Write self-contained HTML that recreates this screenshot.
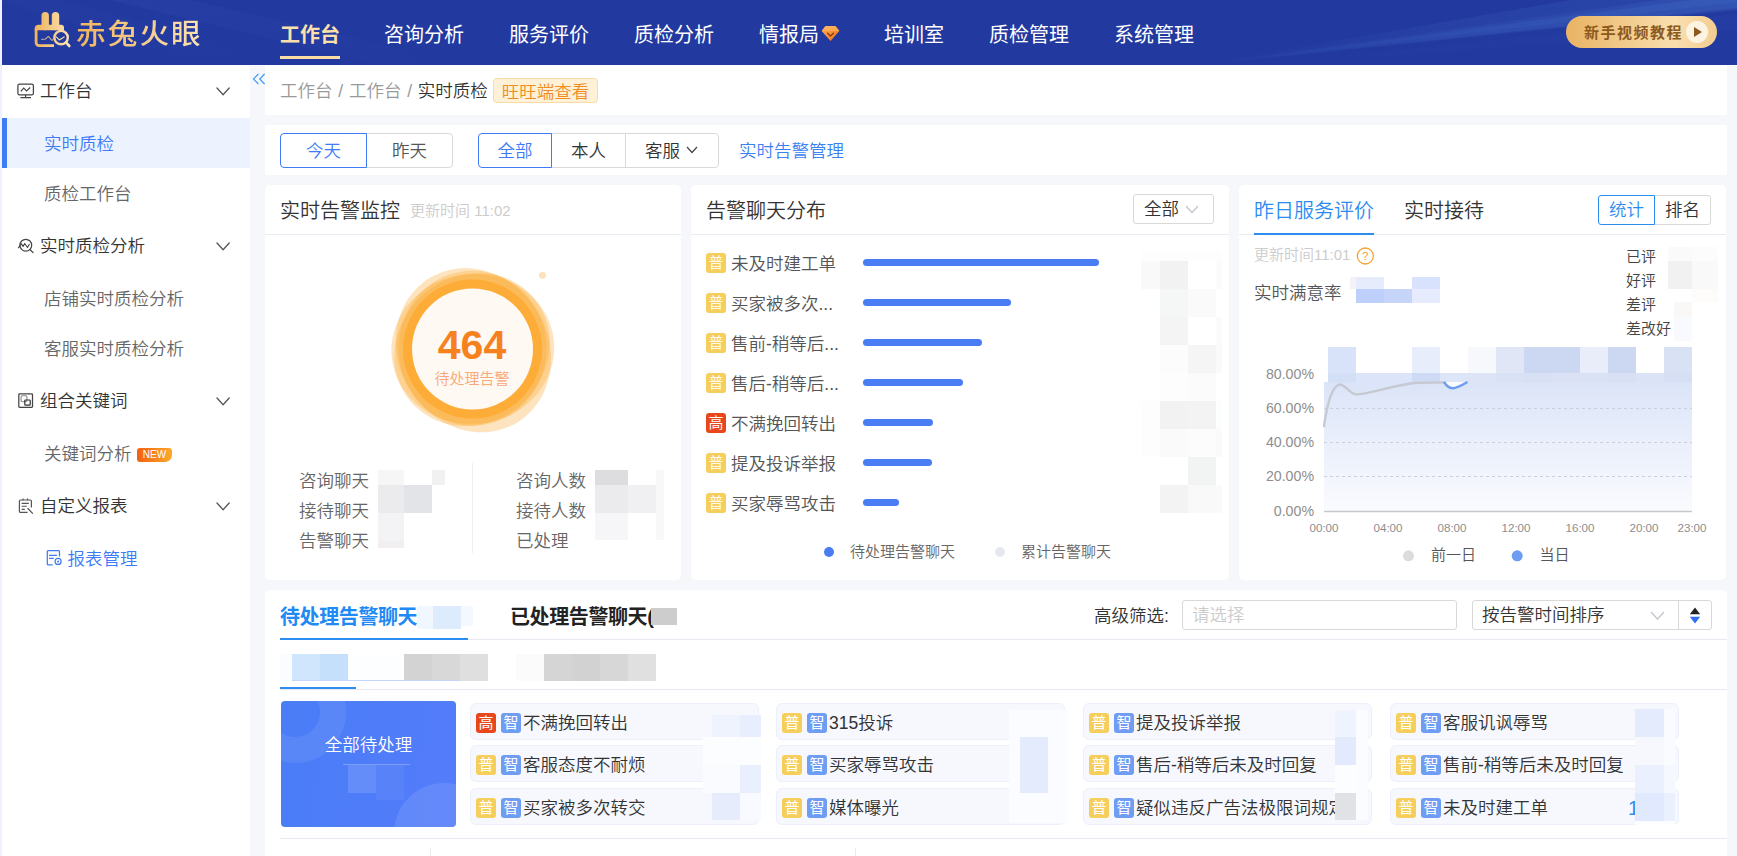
<!DOCTYPE html>
<html lang="zh-CN">
<head>
<meta charset="utf-8">
<title>赤兔火眼 - 实时质检</title>
<style>
*{box-sizing:border-box;margin:0;padding:0}
html,body{width:1737px;height:856px;overflow:hidden;background:#f6f7fa}
body{font-family:"Liberation Sans","Noto Sans CJK SC",sans-serif;color:#333;font-size:17.5px;position:relative;font-weight:350}
.abs,.t,.m{position:absolute}
.t{white-space:nowrap;line-height:24px}
.m{display:block}
#strip{left:0;top:0;width:2px;height:856px;background:#eef2fe;z-index:50}
#hdr{left:0;top:0;width:1737px;height:65px;background:#22399f;overflow:hidden}
#hdr .ray{position:absolute;left:0;top:0;width:1737px;height:65px}
.nav{position:absolute;top:0;height:65px;line-height:71px;font-size:20px;color:#fff;white-space:nowrap;font-weight:400}
.nav.on{font-weight:bold;color:#fbe0ac}
#navline{left:280px;top:56px;width:60px;height:3px;background:#fbdca4}
#logo-t{left:76.3px;top:14.5px;font-size:28px;line-height:40px;letter-spacing:1.9px;transform:scaleX(1.06);transform-origin:0 0;font-weight:500;background:linear-gradient(90deg,#f0b45c,#fbe3b6);-webkit-background-clip:text;background-clip:text;color:transparent;white-space:nowrap}
#tut{left:1566px;top:16px;width:151px;height:32px;border-radius:16px;background:linear-gradient(90deg,#e9b364,#f9dfae 72%,#f2cd90)}
#tut span{position:absolute;left:18px;top:0;line-height:33px;font-size:15px;font-weight:700;color:#8d5a1e;letter-spacing:1.5px;white-space:nowrap}
#tut i{position:absolute;left:120px;top:5px;width:22px;height:22px;border-radius:50%;background:#fdf3e3}
#tut i:after{content:"";position:absolute;left:8px;top:6px;border-left:8px solid #8d5a1e;border-top:5px solid transparent;border-bottom:5px solid transparent}
#side{left:2px;top:65px;width:248px;height:791px;background:#fff}
.sg,.si{position:absolute;left:0;width:248px;height:50px;line-height:51px;font-size:17.5px;white-space:nowrap}
.sg{color:#333}.si{color:#666;line-height:53px}
.sg span{position:absolute;left:38px}
.si span{position:absolute;left:42px}
.si.on{background:#ecf2fe;color:#3d7bf7}
.si.on:before{content:"";position:absolute;left:0;top:0;width:5px;height:50px;background:#3d7bf7}
.chev{position:absolute;left:214.3px;top:21.3px;width:14px;height:9px}
.ico{position:absolute}
.card{position:absolute;background:#fff;border-radius:5px}
.hl{position:absolute;height:1px;background:#e9ebf2}
.btn{position:absolute;top:133px;height:35px;line-height:34px;text-align:center;font-size:17.5px;color:#333;border:1px solid #d9d9d9;background:#fff;white-space:nowrap}
.btn.on{color:#3d7bf7;border-color:#3d7bf7;z-index:2}
.tag{position:absolute;width:20px;height:20px;line-height:20px;text-align:center;font-size:15px;color:#fff;border-radius:3px}
.tp{background:#f5ce5b}.tg{background:#e8471e}.tz{background:#6f9df3}
.bar{position:absolute;left:863px;height:7px;border-radius:4px;background:#4a7df3}
.ac{position:absolute;width:289px;height:37px;background:#f6f8fe;border:1px solid #ebf0fb;border-radius:6px}
</style>
</head>
<body>
<div id="hdr" class="abs">
<svg class="ray" viewBox="0 0 1737 65" preserveAspectRatio="none">
<defs><linearGradient id="rg" gradientUnits="userSpaceOnUse" x1="1190" y1="0" x2="1737" y2="0"><stop offset="0" stop-color="#4470c8" stop-opacity="0"/><stop offset="0.5" stop-color="#4470c8" stop-opacity="0.35"/><stop offset="1" stop-color="#4470c8" stop-opacity="0.6"/></linearGradient>
<linearGradient id="rg2" x1="0" y1="0" x2="1" y2="1"><stop offset="0" stop-color="#5b82d6" stop-opacity="0.28"/><stop offset="1" stop-color="#5b82d6" stop-opacity="0"/></linearGradient></defs>
<polygon points="1190,66 1570,0 1737,0 1737,10" fill="url(#rg)" opacity="0.42"/>
<polygon points="1190,66 1737,-6 1737,8" fill="url(#rg)" opacity="0.5"/>
<polygon points="1190,66 1660,0 1737,0 1737,2" fill="url(#rg)" opacity="0.35"/>
<polygon points="1250,66 1737,14 1737,30" fill="url(#rg)" opacity="0.12"/>
<polygon points="110,0 190,0 470,65 380,65" fill="url(#rg2)" opacity="0.3"/>
<polygon points="0,0 60,0 300,65 200,65" fill="url(#rg2)" opacity="0.15"/>
</svg>
<svg class="abs" style="left:30px;top:8px" width="44" height="44" viewBox="30 8 44 44">
<defs><linearGradient id="lg" gradientUnits="userSpaceOnUse" x1="34" y1="0" x2="70" y2="0"><stop offset="0" stop-color="#efb258"/><stop offset="1" stop-color="#fbe4b8"/></linearGradient></defs>
<path d="M45.2 15.6v11M55.5 15.6v11" stroke="url(#lg)" stroke-width="7.4" stroke-linecap="round" fill="none"/>
<path d="M34.7 30.3v-1.5a4 4 0 0 1 4-4H61a3 3 0 0 1 3 3v2.5z" fill="url(#lg)"/>
<path d="M36.1 29v13.6a3 3 0 0 0 3 3H54" stroke="url(#lg)" stroke-width="2.8" fill="none"/>
<circle cx="61.1" cy="37.6" r="6.7" stroke="url(#lg)" stroke-width="2.4" fill="#22399f"/>
<path d="M66.2 42.7l3.1 3.3" stroke="url(#lg)" stroke-width="2.6" stroke-linecap="round"/>
<path d="M41.5 39.3H45l3.4-3 3.6 4.2 3-3.4" stroke="#e9c48a" stroke-width="1.1" fill="none" stroke-linejoin="round" stroke-linecap="round" opacity=".85"/>
<path d="M56.3 36.9l3 3 4.8-3" stroke="#f6d9a6" stroke-width="1.2" fill="none" stroke-linejoin="round" stroke-linecap="round"/>
</svg>
<div id="logo-t" class="abs">赤兔火眼</div>
<div class="nav on" style="left:280px">工作台</div>
<div class="nav" style="left:384px">咨询分析</div>
<div class="nav" style="left:509px">服务评价</div>
<div class="nav" style="left:634px">质检分析</div>
<div class="nav" style="left:759px">情报局</div>
<div class="nav" style="left:884px">培训室</div>
<div class="nav" style="left:989px">质检管理</div>
<div class="nav" style="left:1114px">系统管理</div>
<svg class="abs" style="left:821px;top:25px" width="19" height="17" viewBox="0 0 19 17">
<defs><linearGradient id="dg" x1="0" y1="0" x2="1" y2="1"><stop offset="0" stop-color="#ffb45a"/><stop offset="1" stop-color="#f26a14"/></linearGradient></defs>
<path d="M4.5 1h10l3.8 5L9.5 16 .7 6z" fill="url(#dg)"/>
<path d="M4.5 1h10l3.8 5H.7z" fill="#ffb55e" opacity=".7"/>
<path d="M6.6 8.2l2.9 2.8 2.9-2.8" stroke="#7a3a1a" stroke-width="1.2" fill="none" stroke-linecap="round" stroke-linejoin="round"/>
</svg>
<div id="navline" class="abs"></div>
<div id="tut" class="abs"><span>新手视频教程</span><i></i></div>
</div>
<div id="strip" class="abs"></div>
<div id="side" class="abs">
<div class="sg" style="top:1px"><svg class="ico" style="left:13px;top:15px" width="22" height="20" viewBox="13 15 22 20"><rect x="15.9" y="18" width="15.5" height="10.8" rx="1.6" stroke="#444" stroke-width="1.25" fill="none"/><path d="M18.8 25.3l2.9-3.2 2.9 2.9 3.6-3.5" stroke="#444" stroke-width="1.15" fill="none"/><path d="M23.6 28.8v2.6M18.4 31.6h10.6" stroke="#444" stroke-width="1.2" fill="none"/></svg><span>工作台</span><svg class="chev" viewBox="0 0 14 9"><path d="M1 1l6.1 6.7L13.2 1" stroke="#555" stroke-width="1.3" fill="none" stroke-linecap="round" stroke-linejoin="miter"/></svg></div>
<div class="si on" style="top:53px"><span>实时质检</span></div>
<div class="si" style="top:103px"><span>质检工作台</span></div>
<div class="sg" style="top:156px"><svg class="ico" style="left:13px;top:15px" width="22" height="20" viewBox="13 15 22 20"><circle cx="23.8" cy="24.2" r="5.9" stroke="#444" stroke-width="1.2" fill="none"/><path d="M28.1 28.7l3 2.9" stroke="#444" stroke-width="1.3" stroke-linecap="round"/><path d="M16.2 27.2l3.3-4.3 1.6 2.6 1.6-3 2.8 4 2-3.5" stroke="#444" stroke-width="1.1" fill="none" stroke-linejoin="round"/></svg><span>实时质检分析</span><svg class="chev" viewBox="0 0 14 9"><path d="M1 1l6.1 6.7L13.2 1" stroke="#555" stroke-width="1.3" fill="none" stroke-linecap="round" stroke-linejoin="miter"/></svg></div>
<div class="si" style="top:208px"><span>店铺实时质检分析</span></div>
<div class="si" style="top:258px"><span>客服实时质检分析</span></div>
<div class="sg" style="top:311px"><svg class="ico" style="left:13px;top:15px" width="22" height="20" viewBox="13 15 22 20"><rect x="16.8" y="17.9" width="13.7" height="13.4" rx=".8" stroke="#444" stroke-width="1.25" fill="none"/><rect x="19" y="19.8" width="6" height="6" rx="1.6" stroke="#888" stroke-width="1.1" fill="none"/><rect x="22.8" y="24" width="5.4" height="5.2" rx=".6" stroke="#333" stroke-width="1.2" fill="none"/></svg><span>组合关键词</span><svg class="chev" viewBox="0 0 14 9"><path d="M1 1l6.1 6.7L13.2 1" stroke="#555" stroke-width="1.3" fill="none" stroke-linecap="round" stroke-linejoin="miter"/></svg></div>
<div class="si" style="top:363px"><span>关键词分析</span><b style="position:absolute;left:135px;top:20px;width:35px;height:14px;line-height:14.5px;font-size:10px;font-weight:normal;color:#fff;text-align:center;background:linear-gradient(90deg,#f2600f,#fbaa2c);border-radius:3px 3px 7px 3px">NEW</b></div>
<div class="sg" style="top:416px"><svg class="ico" style="left:13px;top:15px" width="22" height="20" viewBox="13 15 22 20"><path d="M29.4 26.5V20.2a1.2 1.2 0 0 0-1.2-1.2H18.6a1.2 1.2 0 0 0-1.2 1.2v10a1.2 1.2 0 0 0 1.2 1.2h7" stroke="#555" stroke-width="1.2" fill="none"/><path d="M21.1 17.6v1.8M25.5 17.6v1.8" stroke="#555" stroke-width="1.1"/><path d="M19.6 22.4h7.2M19.6 25.3h5.2M19.6 28.4h3.2" stroke="#555" stroke-width="1.1"/><path d="M25.6 27.2l5.2 5.4" stroke="#444" stroke-width="1.2"/></svg><span>自定义报表</span><svg class="chev" viewBox="0 0 14 9"><path d="M1 1l6.1 6.7L13.2 1" stroke="#555" stroke-width="1.3" fill="none" stroke-linecap="round" stroke-linejoin="miter"/></svg></div>
<div class="si" style="top:468px;color:#3d7bf7"><svg class="ico" style="left:42px;top:15px" width="22" height="20" viewBox="42 15 22 20"><path d="M57.5 23.6v-5a1 1 0 0 0-1-1H46.3a1 1 0 0 0-1 1v12.3a1 1 0 0 0 1 1h4.3" stroke="#3d7bf7" stroke-width="1.25" fill="none"/><path d="M47 22.3h7.9M47 25.4h4.7" stroke="#3d7bf7" stroke-width="1.15"/><circle cx="56.1" cy="28.4" r="3" stroke="#3d7bf7" stroke-width="1.2" fill="none"/><circle cx="56.1" cy="28.4" r="1" fill="#3d7bf7"/></svg><span style="left:65.4px">报表管理</span></div>
</div>
<svg class="abs" style="left:251.6px;top:72.6px" width="14" height="12" viewBox="0 0 14 12"><path d="M6.4 1L1.5 6l4.9 5M12.6 1L7.7 6l4.9 5" stroke="#3d9bf7" stroke-width="1.2" fill="none" stroke-linejoin="miter"/></svg>
<div class="abs" style="left:265px;top:66px;width:1462px;height:49px;background:#fff"></div>
<div class="abs" style="left:250px;top:65px;width:1487px;height:1px;background:#fff"></div>
<div class="t" style="left:280px;top:79px;color:#999;word-spacing:.9px">工作台 / 工作台 / <span style="color:#333">实时质检</span></div>
<div class="t" style="left:493px;top:78px;width:105px;height:25px;line-height:26px;text-align:center;color:#f08c1e;background:#fef1d7;border:1px solid #f9dca4;border-radius:4px">旺旺端查看</div>
<div class="abs" style="left:265px;top:125px;width:1462px;height:50px;background:#fff"></div>
<div class="btn on" style="left:280px;width:87px;border-radius:4px 0 0 4px">今天</div>
<div class="btn" style="left:366px;width:87px;border-radius:0 4px 4px 0;color:#555">昨天</div>
<div class="btn on" style="left:478px;width:74px;border-radius:4px 0 0 4px">全部</div>
<div class="btn" style="left:551px;width:75px">本人</div>
<div class="btn" style="left:625px;width:94px;border-radius:0 4px 4px 0;text-align:left;padding-left:19px">客服<svg style="position:absolute;left:60px;top:12px" width="12" height="8" viewBox="0 0 12 8"><path d="M1 1l5 5.5L11 1" stroke="#444" stroke-width="1.2" fill="none"/></svg></div>
<div class="t" style="left:739px;top:139px;color:#3b82f0">实时告警管理</div>
<div class="card" style="left:265px;top:185px;width:416px;height:395px"></div>
<div class="hl" style="left:265px;top:234px;width:416px"></div>
<div class="t" style="left:280px;top:198px;font-size:20px;line-height:26px">实时告警监控</div>
<div class="t" style="left:410px;top:199px;font-size:15px;color:#ccc">更新时间 11:02</div>
<svg class="abs" style="left:372px;top:250px" width="200" height="190" viewBox="372 250 200 190">
<g fill="#fda529">
<ellipse cx="473.4" cy="350.2" rx="84.5" ry="75" opacity=".3" transform="rotate(59 473.4 350.2)"/>
<ellipse cx="472.8" cy="349" rx="81.5" ry="75" opacity=".3" transform="rotate(-6 472.8 349)"/>
<ellipse cx="472" cy="349.6" rx="80.5" ry="73.5" opacity=".3" transform="rotate(-40 472 349.6)"/>
<ellipse cx="472.5" cy="348.2" rx="74" ry="77.5" opacity=".3"/>
<circle cx="472.5" cy="349" r="69.5" opacity=".7"/>
</g>
<circle cx="472.5" cy="349" r="60.5" fill="#fff9f4"/>
<circle cx="542.5" cy="275.3" r="3.5" fill="#fde2bd"/>
</svg>
<div class="t" style="left:372px;top:320px;width:200px;text-align:center;font-size:41px;line-height:50px;font-weight:bold;color:#f5821f">464</div>
<div class="t" style="left:372px;top:367px;width:200px;text-align:center;font-size:15px;color:#f9a877">待处理告警</div>
<div class="t" style="left:299px;top:469px;color:#666">咨询聊天</div>
<div class="t" style="left:516px;top:469px;color:#666">咨询人数</div>
<div class="t" style="left:299px;top:499px;color:#666">接待聊天</div>
<div class="t" style="left:516px;top:499px;color:#666">接待人数</div>
<div class="t" style="left:299px;top:529px;color:#666">告警聊天</div>
<div class="t" style="left:516px;top:529px;color:#666">已处理</div>
<div class="abs" style="left:472px;top:463px;width:1px;height:90px;background:#eee"></div>
<i class="m" style="left:378px;top:470px;width:26px;height:15px;background:#f6f6f7"></i>
<i class="m" style="left:432px;top:470px;width:13px;height:15px;background:#f1f1f2"></i>
<i class="m" style="left:378px;top:485px;width:26px;height:28px;background:#ebebed"></i>
<i class="m" style="left:404px;top:485px;width:28px;height:28px;background:#e3e4e7"></i>
<i class="m" style="left:378px;top:513px;width:26px;height:28px;background:#f3f3f5"></i>
<i class="m" style="left:378px;top:541px;width:26px;height:7px;background:#f2eff0"></i>
<i class="m" style="left:595px;top:470px;width:33px;height:15px;background:#dddddf"></i>
<i class="m" style="left:595px;top:485px;width:33px;height:28px;background:#ebebed"></i>
<i class="m" style="left:628px;top:485px;width:28px;height:28px;background:#f0f0f2"></i>
<i class="m" style="left:595px;top:513px;width:33px;height:27px;background:#f6f6f8"></i>
<i class="m" style="left:656px;top:470px;width:8px;height:70px;background:#f8f8f9"></i>
<div class="card" style="left:691px;top:185px;width:538px;height:395px"></div>
<div class="hl" style="left:691px;top:234px;width:538px"></div>
<div class="t" style="left:706px;top:198px;font-size:20px;line-height:26px">告警聊天分布</div>
<div class="abs" style="left:1133px;top:194px;width:81px;height:30px;border:1px solid #d9d9d9;border-radius:3px;background:#fff"><span class="t" style="left:10px;top:2px">全部</span><svg style="position:absolute;left:51px;top:10px" width="14" height="9" viewBox="0 0 14 9"><path d="M1 1l6 6.5L13 1" stroke="#c0c4cc" stroke-width="1.2" fill="none"/></svg></div>
<div class="tag tp" style="left:706px;top:253px">普</div>
<div class="t" style="left:731px;top:252px;color:#555">未及时建工单</div>
<div class="bar" style="top:259px;width:236px"></div>
<div class="tag tp" style="left:706px;top:293px">普</div>
<div class="t" style="left:731px;top:292px;color:#555">买家被多次...</div>
<div class="bar" style="top:299px;width:148px"></div>
<div class="tag tp" style="left:706px;top:333px">普</div>
<div class="t" style="left:731px;top:332px;color:#555">售前-稍等后...</div>
<div class="bar" style="top:339px;width:119px"></div>
<div class="tag tp" style="left:706px;top:373px">普</div>
<div class="t" style="left:731px;top:372px;color:#555">售后-稍等后...</div>
<div class="bar" style="top:379px;width:100px"></div>
<div class="tag tg" style="left:706px;top:413px">高</div>
<div class="t" style="left:731px;top:412px;color:#555">不满挽回转出</div>
<div class="bar" style="top:419px;width:70px"></div>
<div class="tag tp" style="left:706px;top:453px">普</div>
<div class="t" style="left:731px;top:452px;color:#555">提及投诉举报</div>
<div class="bar" style="top:459px;width:69px"></div>
<div class="tag tp" style="left:706px;top:493px">普</div>
<div class="t" style="left:731px;top:492px;color:#555">买家辱骂攻击</div>
<div class="bar" style="top:499px;width:36px"></div>
<i class="m" style="left:1141px;top:251px;width:81px;height:10px;background:#fdfdfd"></i>
<i class="m" style="left:1141px;top:261px;width:19px;height:28px;background:#f9f9f9"></i>
<i class="m" style="left:1160px;top:261px;width:28px;height:28px;background:#f2f2f2"></i>
<i class="m" style="left:1216px;top:261px;width:6px;height:28px;background:#fbfbfb"></i>
<i class="m" style="left:1160px;top:289px;width:28px;height:28px;background:#f5f6f6"></i>
<i class="m" style="left:1188px;top:289px;width:28px;height:28px;background:#fafafa"></i>
<i class="m" style="left:1160px;top:317px;width:28px;height:28px;background:#f4f4f4"></i>
<i class="m" style="left:1216px;top:317px;width:6px;height:28px;background:#fbfbfb"></i>
<i class="m" style="left:1160px;top:345px;width:28px;height:28px;background:#fcfcfc"></i>
<i class="m" style="left:1188px;top:345px;width:28px;height:28px;background:#f5f5f5"></i>
<i class="m" style="left:1216px;top:345px;width:6px;height:28px;background:#fafafa"></i>
<i class="m" style="left:1160px;top:373px;width:28px;height:28px;background:#fdfdfd"></i>
<i class="m" style="left:1188px;top:373px;width:28px;height:28px;background:#fbfbfb"></i>
<i class="m" style="left:1141px;top:401px;width:19px;height:28px;background:#fdfdfd"></i>
<i class="m" style="left:1160px;top:401px;width:28px;height:28px;background:#f2f2f2"></i>
<i class="m" style="left:1188px;top:401px;width:28px;height:28px;background:#f3f3f3"></i>
<i class="m" style="left:1216px;top:401px;width:6px;height:28px;background:#fcfdfd"></i>
<i class="m" style="left:1141px;top:429px;width:19px;height:28px;background:#fdfdfd"></i>
<i class="m" style="left:1160px;top:429px;width:28px;height:28px;background:#fafafa"></i>
<i class="m" style="left:1188px;top:429px;width:28px;height:28px;background:#fcfcfc"></i>
<i class="m" style="left:1216px;top:429px;width:6px;height:28px;background:#fafafa"></i>
<i class="m" style="left:1188px;top:457px;width:28px;height:28px;background:#f2f4f4"></i>
<i class="m" style="left:1160px;top:485px;width:28px;height:28px;background:#f3f3f3"></i>
<i class="m" style="left:1188px;top:485px;width:28px;height:28px;background:#f9f9f9"></i>
<i class="m" style="left:1216px;top:485px;width:6px;height:28px;background:#fafafa"></i>
<div class="abs" style="left:824px;top:547px;width:10px;height:10px;border-radius:50%;background:#4a7df3"></div>
<div class="t" style="left:850px;top:540px;font-size:15px;color:#666">待处理告警聊天</div>
<div class="abs" style="left:995px;top:547px;width:10px;height:10px;border-radius:50%;background:#e6e8f0"></div>
<div class="t" style="left:1021px;top:540px;font-size:15px;color:#666">累计告警聊天</div>
<div class="card" style="left:1239px;top:185px;width:487px;height:395px"></div>
<div class="hl" style="left:1239px;top:234px;width:487px"></div>
<div class="t" style="left:1254px;top:198px;font-size:20px;line-height:26px;color:#2d8cf0">昨日服务评价</div>
<div class="abs" style="left:1254px;top:233px;width:120px;height:2px;background:#2d8cf0"></div>
<div class="t" style="left:1404px;top:198px;font-size:20px;line-height:26px">实时接待</div>
<div class="abs" style="left:1598px;top:195px;width:57px;height:30px;border:1px solid #2d8cf0;border-radius:3px 0 0 3px;color:#2d8cf0;font-size:17.5px;line-height:29px;text-align:center;z-index:2;background:#fff">统计</div>
<div class="abs" style="left:1654px;top:195px;width:57px;height:30px;border:1px solid #d9d9d9;border-radius:0 3px 3px 0;color:#333;font-size:17.5px;line-height:29px;text-align:center;background:#fff">排名</div>
<div class="t" style="left:1254px;top:243px;font-size:15px;color:#ccc">更新时间11:01</div>
<svg class="abs" style="left:1356px;top:246.5px" width="18" height="18" viewBox="0 0 18 18"><circle cx="9.3" cy="9" r="8" stroke="#f5a233" stroke-width="1.3" fill="none"/><text x="9.3" y="13.2" font-size="11.5" fill="#f5a233" text-anchor="middle" font-family="Liberation Sans,sans-serif">?</text></svg>
<div class="t" style="left:1254px;top:281px;color:#555">实时满意率</div>
<i class="m" style="left:1350px;top:277px;width:6px;height:12px;background:#f3f3f5"></i>
<i class="m" style="left:1356px;top:277px;width:28px;height:12px;background:#e6ecfc"></i>
<i class="m" style="left:1412px;top:277px;width:28px;height:12px;background:#d9e2fd"></i>
<i class="m" style="left:1356px;top:289px;width:28px;height:14px;background:#bfcffb"></i>
<i class="m" style="left:1384px;top:289px;width:28px;height:14px;background:#c8d5fb"></i>
<i class="m" style="left:1412px;top:289px;width:28px;height:14px;background:#e6ecfd"></i>
<div class="t" style="left:1626px;top:245px;font-size:15px;color:#444">已评</div>
<div class="t" style="left:1626px;top:269px;font-size:15px;color:#444">好评</div>
<div class="t" style="left:1626px;top:293px;font-size:15px;color:#444">差评</div>
<div class="t" style="left:1626px;top:317px;font-size:15px;color:#444">差改好</div>
<i class="m" style="left:1668px;top:247px;width:24px;height:14px;background:#fafafa"></i>
<i class="m" style="left:1692px;top:247px;width:26px;height:14px;background:#fcfcfc"></i>
<i class="m" style="left:1668px;top:261px;width:24px;height:28px;background:#f1f1f2"></i>
<i class="m" style="left:1692px;top:261px;width:26px;height:28px;background:#f9f9fa"></i>
<i class="m" style="left:1692px;top:289px;width:26px;height:13px;background:#fdfcfb"></i>
<i class="m" style="left:1674px;top:302px;width:18px;height:15px;background:#faf8f6"></i>
<i class="m" style="left:1674px;top:317px;width:18px;height:24px;background:#f9fafd"></i>
<svg class="abs" style="left:1239px;top:335px" width="488" height="245" viewBox="1239 335 488 245" font-family="Liberation Sans,Noto Sans CJK SC,sans-serif">
<defs><linearGradient id="ag" x1="0" y1="0" x2="0" y2="1"><stop offset="0" stop-color="#dbe4f8"/><stop offset="1" stop-color="#fafbfe"/></linearGradient></defs>
<rect x="1324" y="382" width="368" height="129" fill="url(#ag)"/>
<path d="M1324 408.5H1692" stroke="#c9cfdf" stroke-width="1" stroke-dasharray="3 3" fill="none"/>
<path d="M1324 442.5H1692" stroke="#c9cfdf" stroke-width="1" stroke-dasharray="3 3" fill="none"/>
<path d="M1324 476.5H1692" stroke="#c9cfdf" stroke-width="1" stroke-dasharray="3 3" fill="none"/>
<path d="M1324 511.5H1692" stroke="#c8c8c8" stroke-width="1.5"/>
<rect x="1328" y="347" width="28" height="26" fill="#d8e2f9"/>
<rect x="1356" y="347" width="28" height="26" fill="#fff"/>
<rect x="1384" y="347" width="28" height="26" fill="#fff"/>
<rect x="1412" y="347" width="28" height="26" fill="#e8edfb"/>
<rect x="1440" y="347" width="28" height="26" fill="#fff"/>
<rect x="1468" y="347" width="28" height="26" fill="#f7f8fc"/>
<rect x="1496" y="347" width="28" height="26" fill="#e0e6f6"/>
<rect x="1524" y="347" width="28" height="26" fill="#ccd8f1"/>
<rect x="1552" y="347" width="28" height="26" fill="#ccd8f1"/>
<rect x="1580" y="347" width="28" height="26" fill="#e8edf9"/>
<rect x="1608" y="347" width="28" height="26" fill="#ccd8f1"/>
<rect x="1636" y="347" width="28" height="26" fill="#fff"/>
<rect x="1664" y="347" width="28" height="26" fill="#d9e1f4"/>
<rect x="1328" y="373" width="28" height="9.5" fill="#d3def7"/>
<rect x="1356" y="373" width="28" height="9.5" fill="#dbe4f9"/>
<rect x="1384" y="373" width="28" height="9.5" fill="#dbe4f9"/>
<rect x="1412" y="373" width="28" height="9.5" fill="#cfdbf5"/>
<rect x="1440" y="373" width="28" height="9.5" fill="#dde5f9"/>
<rect x="1468" y="373" width="28" height="9.5" fill="#dde4f6"/>
<rect x="1496" y="373" width="28" height="9.5" fill="#d9e1f5"/>
<rect x="1524" y="373" width="28" height="9.5" fill="#d8e0f4"/>
<rect x="1552" y="373" width="28" height="9.5" fill="#dae1f4"/>
<rect x="1580" y="373" width="28" height="9.5" fill="#d9e1f5"/>
<rect x="1608" y="373" width="28" height="9.5" fill="#d8e0f4"/>
<rect x="1636" y="373" width="28" height="9.5" fill="#dbe3f6"/>
<rect x="1664" y="373" width="28" height="9.5" fill="#d6dff4"/>
<path d="M1324 426C1327 405 1332 386 1339.5 384.5C1345 384 1349 393.5 1356 394.5C1366 394.5 1385 388 1410 383.5C1425 382 1435 382.5 1445 382.5" stroke="#c6c9d2" stroke-width="2.4" fill="none" stroke-linecap="round"/>
<path d="M1444 382C1447 386.5 1450 388.5 1453 388.2C1458 388 1462 385 1467.5 382Z" fill="#fbfbfc" stroke="none"/>
<path d="M1444 382C1447 386.5 1450 388.5 1453 388.2C1458 388 1462 385 1467.5 382" stroke="#6d9cf3" stroke-width="2.4" fill="none"/>
<text x="1314" y="379" font-size="14.2" fill="#8e8e8e" text-anchor="end">80.00%</text>
<text x="1314" y="413" font-size="14.2" fill="#8e8e8e" text-anchor="end">60.00%</text>
<text x="1314" y="447" font-size="14.2" fill="#8e8e8e" text-anchor="end">40.00%</text>
<text x="1314" y="481" font-size="14.2" fill="#8e8e8e" text-anchor="end">20.00%</text>
<text x="1314" y="516" font-size="14.2" fill="#8e8e8e" text-anchor="end">0.00%</text>
<text x="1324" y="532" font-size="11.7" fill="#8e8e8e" text-anchor="middle">00:00</text>
<text x="1388" y="532" font-size="11.7" fill="#8e8e8e" text-anchor="middle">04:00</text>
<text x="1452" y="532" font-size="11.7" fill="#8e8e8e" text-anchor="middle">08:00</text>
<text x="1516" y="532" font-size="11.7" fill="#8e8e8e" text-anchor="middle">12:00</text>
<text x="1580" y="532" font-size="11.7" fill="#8e8e8e" text-anchor="middle">16:00</text>
<text x="1644" y="532" font-size="11.7" fill="#8e8e8e" text-anchor="middle">20:00</text>
<text x="1692" y="532" font-size="11.7" fill="#8e8e8e" text-anchor="middle">23:00</text>
<circle cx="1408.5" cy="555.8" r="5.5" fill="#dcdcdc"/><text x="1431" y="560" font-size="15" fill="#555">前一日</text>
<circle cx="1517.2" cy="555.8" r="5.5" fill="#6d9cf3"/><text x="1539.5" y="560" font-size="15" fill="#555">当日</text>
</svg>
<div class="abs" style="left:265px;top:590px;width:1462px;height:276px;background:#fff;border-radius:5px 5px 0 0"></div>
<div class="t" style="left:280px;top:604px;font-size:20px;line-height:26px;font-weight:bold;color:#2189f3;letter-spacing:-.4px">待处理告警聊天</div>
<i class="m" style="left:417px;top:606px;width:16px;height:23px;background:#f1f7fe"></i>
<i class="m" style="left:433px;top:606px;width:28px;height:23px;background:#dcecfd"></i>
<i class="m" style="left:461px;top:606px;width:12px;height:20px;background:#f4f9ff"></i>
<div class="abs" style="left:280px;top:638px;width:188px;height:2px;background:#2d8cf0;z-index:2"></div>
<div class="t" style="left:510px;top:604px;font-size:20px;line-height:26px;font-weight:bold;color:#222;letter-spacing:-.4px">已处理告警聊天(</div>
<i class="m" style="left:651px;top:608px;width:26px;height:17px;background:#cdcdcd"></i>
<div class="hl" style="left:280px;top:639px;width:1447px;background:#e6e9f0"></div>
<div class="t" style="left:1094px;top:604px">高级筛选:</div>
<div class="abs" style="left:1182px;top:600px;width:275px;height:30px;border:1px solid #d9d9d9;border-radius:3px"><span class="t" style="left:9px;top:2px;color:#ccc">请选择</span></div>
<div class="abs" style="left:1472px;top:600px;width:240px;height:30px;border:1px solid #d9d9d9;border-radius:3px"><span class="t" style="left:9px;top:2px">按告警时间排序</span><svg style="position:absolute;left:177px;top:10px" width="15" height="10" viewBox="0 0 15 10"><path d="M1 1l6.5 7L14 1" stroke="#c0c4cc" stroke-width="1.2" fill="none"/></svg><i style="position:absolute;left:205px;top:0;width:1px;height:28px;background:#d9d9d9"></i><svg style="position:absolute;left:216px;top:6px" width="12" height="17" viewBox="0 0 12 17"><path d="M6 .5l5.2 6.8H.8z" fill="#222"/><path d="M6 16.5L.8 9.7h10.4z" fill="#2d6ef5"/></svg></div>
<i class="m" style="left:280px;top:654px;width:12px;height:27px;background:#fafcff"></i>
<i class="m" style="left:292px;top:654px;width:28px;height:27px;background:#d0e6fc"></i>
<i class="m" style="left:320px;top:654px;width:28px;height:27px;background:#c4e0fb"></i>
<i class="m" style="left:348px;top:654px;width:56px;height:27px;background:#fdfeff"></i>
<i class="m" style="left:404px;top:654px;width:28px;height:27px;background:#d3d3d3"></i>
<i class="m" style="left:432px;top:654px;width:28px;height:27px;background:#d8d8d8"></i>
<i class="m" style="left:460px;top:654px;width:28px;height:27px;background:#dfdfdf"></i>
<i class="m" style="left:516px;top:654px;width:28px;height:27px;background:#fbfbfc"></i>
<i class="m" style="left:544px;top:654px;width:28px;height:27px;background:#d5d5d5"></i>
<i class="m" style="left:572px;top:654px;width:28px;height:27px;background:#d2d2d2"></i>
<i class="m" style="left:600px;top:654px;width:28px;height:27px;background:#d7d7d7"></i>
<i class="m" style="left:628px;top:654px;width:28px;height:27px;background:#e0e0e0"></i>
<div class="abs" style="left:292px;top:680px;width:168px;height:1px;background:#c5d6f8"></div>
<div class="abs" style="left:280px;top:687px;width:76px;height:2px;background:#2d8cf0;z-index:2"></div>
<div class="hl" style="left:280px;top:689px;width:1447px;background:#e6e9f0"></div>
<div class="abs" style="left:281px;top:701px;width:175px;height:126px;border-radius:4px;background:linear-gradient(100deg,#4a7df7,#547cfa);overflow:hidden"><i class="m" style="left:-37px;top:-40px;width:102px;height:102px;border-radius:50%;border:26px solid rgba(255,255,255,.08)"></i><i class="m" style="left:113px;top:82px;width:100px;height:100px;border-radius:50%;background:rgba(255,255,255,.1)"></i><i class="m" style="left:67px;top:64px;width:28px;height:28px;background:rgba(255,255,255,.13)"></i><i class="m" style="left:95px;top:64px;width:28px;height:35px;background:rgba(255,255,255,.05)"></i><i class="m" style="left:62px;top:63px;width:67px;height:1px;background:rgba(255,255,255,.25)"></i><span class="t" style="left:0;top:32px;width:175px;text-align:center;color:#fff">全部待处理</span></div>
<div class="ac" style="left:470px;top:703px"><b class="tag tg" style="left:5px;top:9px;font-weight:normal">高</b><b class="tag tz" style="left:30px;top:9px;font-weight:normal">智</b><span class="t" style="left:52px;top:7px;width:230px;overflow:hidden">不满挽回转出</span></div>
<div class="ac" style="left:470px;top:745px"><b class="tag tp" style="left:5px;top:9px;font-weight:normal">普</b><b class="tag tz" style="left:30px;top:9px;font-weight:normal">智</b><span class="t" style="left:52px;top:7px;width:230px;overflow:hidden">客服态度不耐烦</span></div>
<div class="ac" style="left:470px;top:788px"><b class="tag tp" style="left:5px;top:9px;font-weight:normal">普</b><b class="tag tz" style="left:30px;top:9px;font-weight:normal">智</b><span class="t" style="left:52px;top:7px;width:230px;overflow:hidden">买家被多次转交</span></div>
<div class="ac" style="left:776px;top:703px"><b class="tag tp" style="left:5px;top:9px;font-weight:normal">普</b><b class="tag tz" style="left:30px;top:9px;font-weight:normal">智</b><span class="t" style="left:52px;top:7px;width:230px;overflow:hidden">315投诉</span></div>
<div class="ac" style="left:776px;top:745px"><b class="tag tp" style="left:5px;top:9px;font-weight:normal">普</b><b class="tag tz" style="left:30px;top:9px;font-weight:normal">智</b><span class="t" style="left:52px;top:7px;width:230px;overflow:hidden">买家辱骂攻击</span></div>
<div class="ac" style="left:776px;top:788px"><b class="tag tp" style="left:5px;top:9px;font-weight:normal">普</b><b class="tag tz" style="left:30px;top:9px;font-weight:normal">智</b><span class="t" style="left:52px;top:7px;width:230px;overflow:hidden">媒体曝光</span></div>
<div class="ac" style="left:1083px;top:703px"><b class="tag tp" style="left:5px;top:9px;font-weight:normal">普</b><b class="tag tz" style="left:30px;top:9px;font-weight:normal">智</b><span class="t" style="left:52px;top:7px;width:215px;overflow:hidden">提及投诉举报</span></div>
<div class="ac" style="left:1083px;top:745px"><b class="tag tp" style="left:5px;top:9px;font-weight:normal">普</b><b class="tag tz" style="left:30px;top:9px;font-weight:normal">智</b><span class="t" style="left:52px;top:7px;width:215px;overflow:hidden">售后-稍等后未及时回复</span></div>
<div class="ac" style="left:1083px;top:788px"><b class="tag tp" style="left:5px;top:9px;font-weight:normal">普</b><b class="tag tz" style="left:30px;top:9px;font-weight:normal">智</b><span class="t" style="left:52px;top:7px;width:215px;overflow:hidden">疑似违反广告法极限词规定</span></div>
<div class="ac" style="left:1390px;top:703px"><b class="tag tp" style="left:5px;top:9px;font-weight:normal">普</b><b class="tag tz" style="left:30px;top:9px;font-weight:normal">智</b><span class="t" style="left:52px;top:7px;width:230px;overflow:hidden">客服讥讽辱骂</span></div>
<div class="ac" style="left:1390px;top:745px"><b class="tag tp" style="left:5px;top:9px;font-weight:normal">普</b><b class="tag tz" style="left:30px;top:9px;font-weight:normal">智</b><span class="t" style="left:52px;top:7px;width:230px;overflow:hidden">售前-稍等后未及时回复</span></div>
<div class="ac" style="left:1390px;top:788px"><b class="tag tp" style="left:5px;top:9px;font-weight:normal">普</b><b class="tag tz" style="left:30px;top:9px;font-weight:normal">智</b><span class="t" style="left:52px;top:7px;width:230px;overflow:hidden">未及时建工单</span></div>
<i class="m" style="left:712px;top:715px;width:28px;height:22px;background:#eef3fe"></i>
<i class="m" style="left:740px;top:715px;width:21px;height:22px;background:#e8eefd"></i>
<i class="m" style="left:703px;top:737px;width:58px;height:28px;background:#fcfdff"></i>
<i class="m" style="left:703px;top:765px;width:37px;height:28px;background:#fafbff"></i>
<i class="m" style="left:740px;top:765px;width:21px;height:28px;background:#e9effd"></i>
<i class="m" style="left:712px;top:793px;width:28px;height:27px;background:#e6ecfc"></i>
<i class="m" style="left:740px;top:793px;width:21px;height:27px;background:#f8faff"></i>
<i class="m" style="left:1009px;top:710px;width:59px;height:113px;background:#fbfcff"></i>
<i class="m" style="left:1020px;top:737px;width:28px;height:56px;background:#e3ebfd"></i>
<i class="m" style="left:1335px;top:710px;width:21px;height:27px;background:#eef3fe"></i>
<i class="m" style="left:1335px;top:737px;width:21px;height:28px;background:#e3eafd"></i>
<i class="m" style="left:1335px;top:765px;width:21px;height:28px;background:#fcfdff"></i>
<i class="m" style="left:1335px;top:793px;width:21px;height:27px;background:#e0e2e6"></i>
<i class="m" style="left:1356px;top:710px;width:12px;height:110px;background:#fbfcff"></i>
<i class="m" style="left:1635px;top:709px;width:29px;height:28px;background:#e3ebfd"></i>
<i class="m" style="left:1635px;top:737px;width:29px;height:28px;background:#f6f8fe"></i>
<i class="m" style="left:1635px;top:765px;width:29px;height:28px;background:#eaf0fd"></i>
<i class="m" style="left:1664px;top:709px;width:11px;height:56px;background:#fafbff"></i>
<i class="m" style="left:1664px;top:765px;width:11px;height:28px;background:#f5f8fe"></i>
<i class="m" style="left:1664px;top:793px;width:11px;height:28px;background:#eaf0fe"></i>
<i class="m" style="left:1635px;top:821px;width:40px;height:4px;background:#fcfdff"></i>
<div class="t" style="left:1628px;top:796px;color:#2d8cf0;font-size:20px;z-index:0">1</div>
<i class="m" style="left:1635px;top:793px;width:29px;height:28px;background:#e0e9fd"></i>
<div class="hl" style="left:280px;top:838px;width:1447px;background:#e6e9f0"></div>
<div class="abs" style="left:430px;top:848px;width:1px;height:8px;background:#e9ebf1"></div>
<div class="abs" style="left:855px;top:848px;width:1px;height:8px;background:#e9ebf1"></div>
</body>
</html>
